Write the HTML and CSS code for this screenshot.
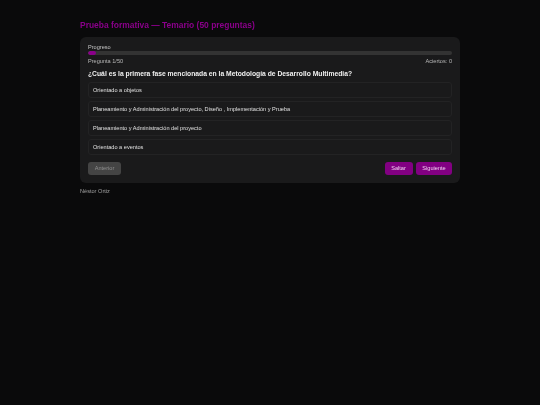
FILE: index.html
```html
<!DOCTYPE html>
<html lang="es">
<head>
<meta charset="utf-8">
<title>Prueba formativa</title>
<link rel="stylesheet" href="styles.css">
</head>
<body>
<main class="page">
  <h1 class="title">Prueba formativa — Temario (50 preguntas)</h1>
  <section class="card">
    <div class="progress-label">Progreso</div>
    <div class="track"><div class="fill" style="width:2.2%"></div></div>
    <div class="meta"><span>Pregunta 1/50</span><span>Aciertos: 0</span></div>
    <h2 class="question">¿Cuál es la primera fase mencionada en la Metodología de Desarrollo Multimedia?</h2>
    <div class="options">
      <div class="option">Orientado a objetos</div>
      <div class="option">Planeamiento y Administración del proyecto, Diseño , Implementación y Prueba</div>
      <div class="option">Planeamiento y Administración del proyecto</div>
      <div class="option">Orientado a eventos</div>
    </div>
    <div class="actions">
      <button class="btn btn-muted">Anterior</button>
      <div class="actions-right">
        <button class="btn btn-primary btn-skip">Saltar</button>
        <button class="btn btn-primary btn-next">Siguiente</button>
      </div>
    </div>
  </section>
  <footer class="author">Néstor Ortiz</footer>
</main>
</body>
</html>
```
FILE: styles.css
```css
* { box-sizing: border-box; }
html, body { margin: 0; height: 100%; }
body {
  background: #0a0a0b;
  color: #e6e6e6;
  font-family: "Liberation Sans", Arial, sans-serif;
  font-size: 5.6px;
}
.page { width: 380px; margin: 0 auto; padding-top: 19px; filter: blur(0.4px); }
.title {
  margin: 0 0 6px;
  font-size: 8.45px;
  line-height: 12px;
  font-weight: 700;
  color: #8a008a;
}
.card {
  background: #1a1a1b;
  border-radius: 6px;
  padding: 7px 8px 6px;
  height: 146px;
}
.progress-label { color: #c4c4c4; line-height: 7px; }
.track { height: 3.5px; background: #333; border-radius: 2px; overflow: hidden; }
.fill { height: 100%; background: #8a008a; border-radius: 2px; }
.meta {
  display: flex;
  justify-content: space-between;
  color: #b8b8b8;
  line-height: 7px;
  margin-top: 3.5px;
}
.question {
  margin: 3.5px 0 0;
  font-size: 6.75px;
  line-height: 9px;
  font-weight: 700;
  color: #f0f0f0;
}
.options { display: flex; flex-direction: column; gap: 3.5px; margin-top: 4.5px; }
.option {
  height: 15.5px;
  display: flex;
  align-items: center;
  padding: 0 4px;
  border: 1px solid #232324;
  border-radius: 3px;
  background: #1a1a1b;
  color: #e0e0e0;
}
.actions { display: flex; justify-content: space-between; align-items: center; margin-top: 7px; }
.actions-right { display: flex; gap: 3.5px; }
.btn {
  height: 13.5px;
  padding: 0;
  border: 0;
  border-radius: 3px;
  font: inherit;
  font-size: 5.6px;
}
.btn-muted { width: 33px; background: #444; color: #909090; }
.btn-primary { background: #820082; color: #f0d0f0; }
.btn-skip { width: 28px; }
.btn-next { width: 36px; }
.author { margin-top: 5px; color: #a0a0a0; line-height: 7px; }
```
